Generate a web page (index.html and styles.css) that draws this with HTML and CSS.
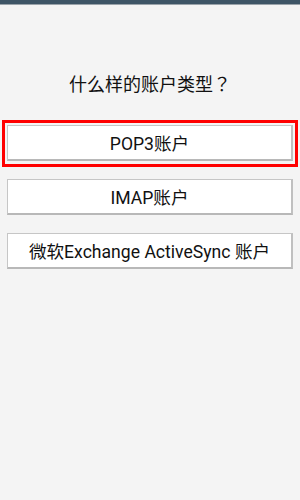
FILE: index.html
```html
<!DOCTYPE html>
<html>
<head>
<meta charset="utf-8">
<link rel="stylesheet" href="styles.css">
</head>
<body>
<div class="statusbar"></div>
<main class="content">
  <h1 class="title">什么样的账户类型？</h1>
  <div class="list">
    <div class="focus"><button class="btn">POP3账户</button></div>
    <div class="item"><button class="btn">IMAP账户</button></div>
    <div class="item"><button class="btn">微软Exchange ActiveSync 账户</button></div>
  </div>
</main>
</body>
</html>
```
FILE: styles.css
```css
html, body {
  margin: 0;
  padding: 0;
  background: #f4f4f4;
  width: 300px;
  height: 500px;
  overflow: hidden;
  font-family: Roboto, "Noto Sans CJK SC", sans-serif;
  color: #111;
}
.statusbar {
  height: 4px;
  background: #3e5566;
  border-bottom: 1px solid #9aa3aa;
}
.content {
  padding: 0 2px;
}
.title {
  margin: 61px 0 0;
  height: 40px;
  font-family: "Noto Sans CJK JP", "Noto Sans CJK SC", sans-serif;
  font-size: 18px;
  font-weight: normal;
  text-align: center;
  line-height: 34px;
}
.list {
  margin-top: 14px;
  display: flex;
  flex-direction: column;
}
.focus {
  border: 3px solid #ff0000;
  padding: 2px 2px;
  height: 37px;
}
.item {
  padding: 0 5px;
  margin-top: 12px;
}
.item + .item {
  margin-top: 18px;
}
.btn {
  display: block;
  width: 100%;
  height: 36px;
  margin: 0;
  background: #fff;
  border: 1px solid #c6c6c6;
  border-right: 2px solid #c0c0c0;
  border-bottom: 2px solid #b8b8b8;
  font-family: Roboto, "Noto Sans CJK SC", sans-serif;
  font-size: 17.6px;
  color: #111;
  padding: 0;
}
```
